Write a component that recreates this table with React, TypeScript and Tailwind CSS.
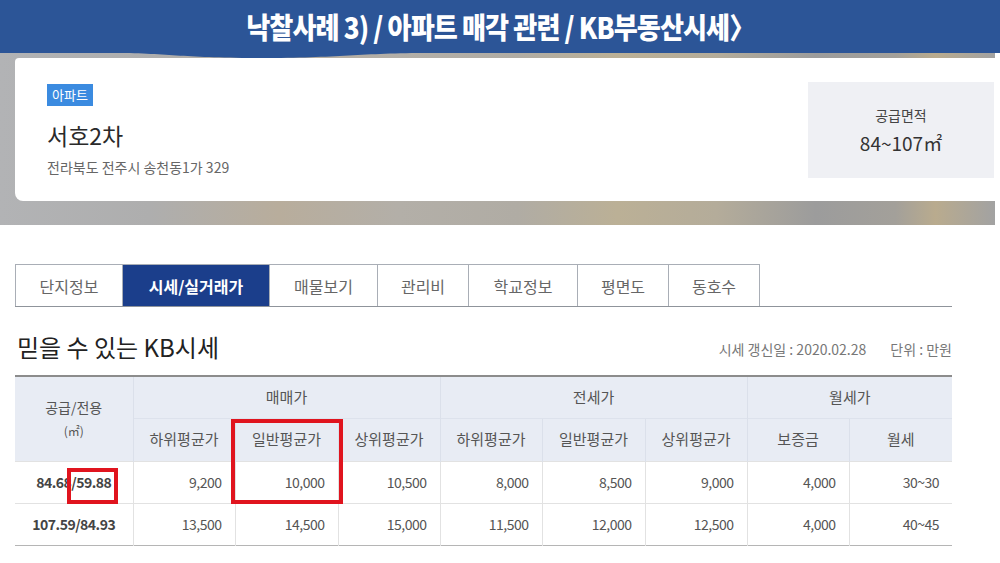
const font = "font-['Noto_Sans_CJK_KR','Noto_Sans',sans-serif]";

const tabs = ["단지정보", "시세/실거래가", "매물보기", "관리비", "학교정보", "평면도", "동호수"];
const tabWidths = ["w-[108px]", "w-[147px]", "w-[108px]", "w-[91px]", "w-[109px]", "w-[91px]", "w-[91px]"];

const rows = [
  { area: "84.68/59.88", vals: ["9,200", "10,000", "10,500", "8,000", "8,500", "9,000", "4,000", "30~30"] },
  { area: "107.59/84.93", vals: ["13,500", "14,500", "15,000", "11,500", "12,000", "12,500", "4,000", "40~45"] },
];

function Banner() {
  return (
    <div className="relative h-[53px] bg-[#2c5597] flex items-center justify-center">
      <h1 className="text-white text-[29px] font-black tracking-[-1px] scale-x-[0.9] leading-none whitespace-nowrap">
        낙찰사례 3) / 아파트 매각 관련 / KB부동산시세〉
      </h1>
      <svg className="absolute left-0 top-full" width="500" height="6" viewBox="0 0 500 6">
        <path d="M110 0 C170 0 180 5 260 5 C340 5 360 0 430 0 Z" fill="#2c5597" />
      </svg>
    </div>
  );
}

function Summary() {
  return (
    <div className="w-[995px] h-[172px] pl-[15px] pt-[5px] bg-[linear-gradient(90deg,#b2b3b5_0%,#aeaeae_15%,#b8ad9c_28%,#b3afa8_40%,#b0aca4_52%,#bbb096_62%,#b4ac9a_72%,#9c9c9c_82%,#a3a09a_90%,#b9ab8e_94%,#a2a2a2_100%)]">
      <div className="h-[143px] bg-white rounded-bl-lg rounded-tl-sm flex justify-between">
        <div className="pl-[32px] pt-[23px]">
          <span className="inline-block bg-[#3b8be0] text-white text-[13px] leading-[22px] px-[5px]">아파트</span>
          <div className="mt-[14px] text-[23px] leading-[30px] text-[#2a2a2a]">서호2차</div>
          <div className="mt-[7px] text-[14px] leading-[20px] text-[#666]">전라북도 전주시 송천동1가 329</div>
        </div>
        <div className="mt-[24px] mr-px w-[186px] h-[96px] bg-[#eff0f4] flex flex-col items-center justify-center">
          <div className="text-[14px] leading-[20px] text-[#444]">공급면적</div>
          <div className="mt-[6px] text-[19px] leading-[24px] text-[#333]">84~107㎡</div>
        </div>
      </div>
    </div>
  );
}

function Tabs() {
  return (
    <div className="ml-[15px] mt-[39px] w-[937px] flex border-b border-[#8f949b]">
      {tabs.map((t, i) => (
        <div
          key={t}
          className={`${tabWidths[i]} h-[42px] flex items-center justify-center text-[16px] border-t border-r border-[#a9aeb6] ${
            i === 0 ? "border-l" : ""
          } ${i === 1 ? "bg-[#1b3e8b] text-white font-bold border-[#1b3e8b]" : "text-[#666]"}`}
        >
          {t}
        </div>
      ))}
    </div>
  );
}

function PriceTable() {
  const th = "border-l border-[#dbe0ea] text-[15px] font-normal text-[#555]";
  const td = "border-l border-t border-[#e2e2e2] text-right pr-[13px] text-[14px] text-[#555] tracking-[-0.5px]";
  return (
    <div className="relative ml-[15px] w-[937px]">
      <table className="w-[937px] table-fixed border-collapse border-t-2 border-b border-t-[#8c8c8c] border-b-[#b5b5b5]">
        <colgroup>
          <col className="w-[118px]" />
          <col className="w-[102px]" />
          <col className="w-[103px]" />
          <col className="w-[102px]" />
          <col className="w-[102px]" />
          <col className="w-[103px]" />
          <col className="w-[102px]" />
          <col className="w-[102px]" />
          <col className="w-[103px]" />
        </colgroup>
        <thead className="bg-[#e8ecf4]">
          <tr className="h-[42px]">
            <th rowSpan={2} className="text-[14px] font-normal text-[#555] align-middle">
              <div>공급/전용</div>
              <div className="text-[12px] mt-[4px]">(㎡)</div>
            </th>
            <th colSpan={3} className={`${th} text-[14px]`}>매매가</th>
            <th colSpan={3} className={`${th} text-[14px]`}>전세가</th>
            <th colSpan={2} className={`${th} text-[14px]`}>월세가</th>
          </tr>
          <tr className="h-[43px]">
            {["하위평균가", "일반평균가", "상위평균가", "하위평균가", "일반평균가", "상위평균가", "보증금", "월세"].map((h, i) => (
              <th key={i} className={`${th} border-t border-t-[#dde2ec]`}>{h}</th>
            ))}
          </tr>
        </thead>
        <tbody>
          {rows.map((r) => (
            <tr key={r.area} className="h-[42px]">
              <td className="border-t border-[#e2e2e2] text-center text-[14px] font-bold text-[#444] tracking-[-0.5px]">{r.area}</td>
              {r.vals.map((v, i) => (
                <td key={i} className={td}>{v}</td>
              ))}
            </tr>
          ))}
        </tbody>
      </table>
      <div className="absolute left-[52px] top-[93px] w-[51px] h-[36px] border-4 border-[#e0141e]" />
      <div className="absolute left-[216px] top-[44px] w-[112px] h-[85px] border-4 border-[#e0141e]" />
    </div>
  );
}

export default function App() {
  return (
    <div className={`w-[1000px] h-[563px] bg-white overflow-hidden ${font}`}>
      <Banner />
      <Summary />
      <Tabs />
      <div className="ml-[17px] mr-[48px] mt-[24px] flex items-end justify-between">
        <h2 className="text-[24px] leading-[32px] text-[#222]">믿을 수 있는 KB시세</h2>
        <div className="text-[14px] leading-[20px] text-[#777] mb-[4px]">
          시세 갱신일 : 2020.02.28<span className="ml-[24px]">단위 : 만원</span>
        </div>
      </div>
      <div className="mt-[12px]">
        <PriceTable />
      </div>
    </div>
  );
}
